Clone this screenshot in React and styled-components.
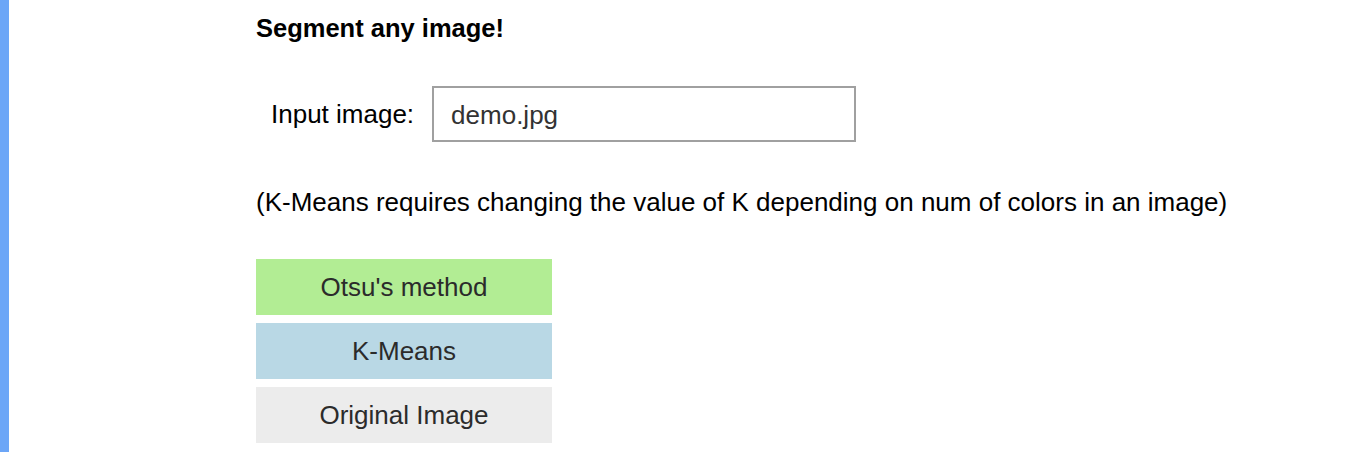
import React from 'react';
import styled, { createGlobalStyle } from 'styled-components';

const GlobalStyle = createGlobalStyle`
    html, body {
        margin: 0;
        padding: 0;
        background: #ffffff;
        font-family: "Liberation Sans", Arial, sans-serif;
    }
`;

const Page = styled.div`
    display: flex;
    min-height: 452px;
`;

const SideBar = styled.div`
    width: 9px;
    background: #6ca6f7;
    flex-shrink: 0;
`;

const Content = styled.div`
    padding: 14px 0 0 247px;
    display: flex;
    flex-direction: column;
`;

const Title = styled.h3`
    margin: 0;
    font-size: 25.5px;
    font-weight: bold;
    color: #000;
    line-height: 28px;
`;

const InputRow = styled.div`
    display: flex;
    align-items: center;
    margin-top: 44px;
    padding-left: 15px;
`;

const Label = styled.label`
    font-size: 26px;
    color: #000;
    margin-right: 18px;
`;

const TextInput = styled.input`
    width: 424px;
    height: 56px;
    box-sizing: border-box;
    border: 2px solid #a0a0a0;
    padding: 2px 17px 0;
    font-family: "Liberation Sans", Arial, sans-serif;
    font-size: 26px;
    color: #333;
    outline: none;
`;

const Note = styled.p`
    margin: 45px 0 0;
    font-size: 26px;
    color: #000;
    line-height: 30px;
`;

const ButtonStack = styled.div`
    display: flex;
    flex-direction: column;
    gap: 8px;
    margin-top: 42px;
`;

const MethodButton = styled.button`
    width: 296px;
    height: 56px;
    border: none;
    padding: 0;
    background: ${(p) => p.$bg};
    font-family: "Liberation Sans", Arial, sans-serif;
    font-size: 26px;
    color: #2b2b2b;
    cursor: pointer;
`;

const App = () => {
    return (
        <>
            <GlobalStyle />
            <Page>
                <SideBar />
                <Content>
                    <Title>Segment any image!</Title>
                    <InputRow>
                        <Label>Input image:</Label>
                        <TextInput type="text" defaultValue="demo.jpg" />
                    </InputRow>
                    <Note>(K-Means requires changing the value of K depending on num of colors in an image)</Note>
                    <ButtonStack>
                        <MethodButton $bg="#b2ed94">Otsu's method</MethodButton>
                        <MethodButton $bg="#b9d8e5">K-Means</MethodButton>
                        <MethodButton $bg="#ececec">Original Image</MethodButton>
                    </ButtonStack>
                </Content>
            </Page>
        </>
    );
};

export default App;
